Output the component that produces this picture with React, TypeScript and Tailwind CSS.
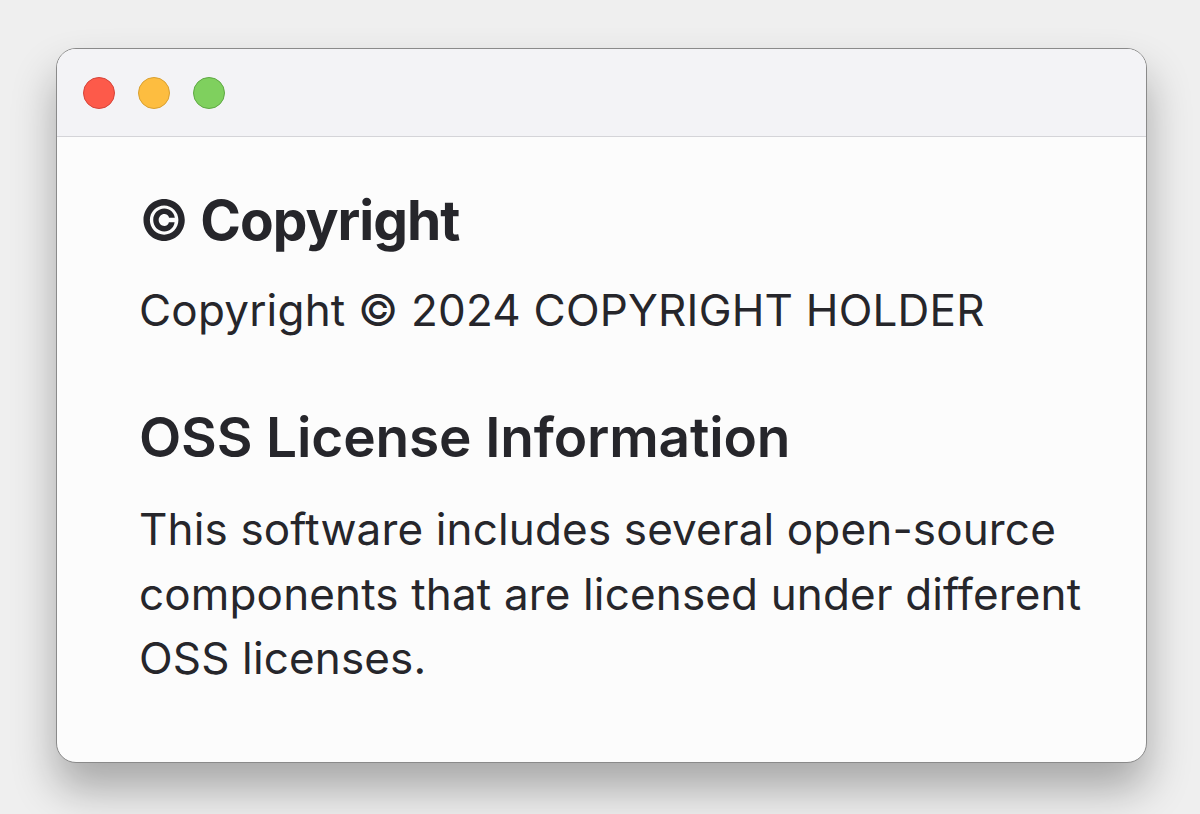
import React from "react";

export default function App() {
  return (
    <div
      className="w-[1200px] h-[814px] bg-[#efefef] pt-[48px] pl-[56px]"
      style={{ fontFamily: "Inter, 'Noto Sans', sans-serif" }}
    >
      <div className="w-[1091px] h-[715px] rounded-[20px] border border-[#8a8a8a] bg-[#fcfcfc] overflow-hidden shadow-[0_26px_44px_rgba(0,0,0,0.3)] flex flex-col">
        <div className="h-[88px] shrink-0 bg-[#f3f3f6] border-b border-[#d4d4d8] flex items-center pl-[26px] gap-[23px]">
          <div className="w-[32px] h-[32px] rounded-full bg-[#fd5a4a] border border-[#d6443a]" />
          <div className="w-[32px] h-[32px] rounded-full bg-[#fdbd40] border border-[#d9a031]" />
          <div className="w-[32px] h-[32px] rounded-full bg-[#7fd05e] border border-[#5fa944]" />
        </div>
        <div className="pl-[82px] pt-[51px] text-[#26262b]">
          <h1 className="text-[55px] leading-[64px] font-bold tracking-[-1px]">© Copyright</h1>
          <p className="text-[44px] leading-[56px] mt-[30px] tracking-[0.2px]">Copyright © 2024 COPYRIGHT HOLDER</p>
          <h2 className="text-[55px] leading-[64px] font-semibold mt-[67px] tracking-[-0.15px]">OSS License Information</h2>
          <p className="text-[44px] leading-[64.5px] mt-[28px] w-[960px] tracking-[0.15px]">
            This software includes several open-source components that are licensed under different OSS licenses.
          </p>
        </div>
      </div>
    </div>
  );
}
